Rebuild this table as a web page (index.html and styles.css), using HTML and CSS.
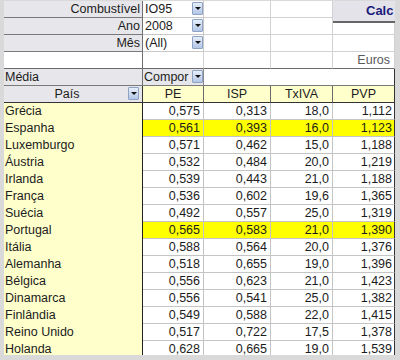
FILE: index.html
```html
<!DOCTYPE html>
<html>
<head>
<meta charset="utf-8">
<link rel="stylesheet" href="styles.css">
</head>
<body>
<div class="frame">
  <div class="sheet">
    <div class="grid">
      <div class="c lab">Combustível</div>
      <div class="c val">IO95<span class="dd"></span></div>
      <div class="c blank"></div>
      <div class="c blank"></div>
      <div class="c blank last"></div>

      <div class="c lab">Ano</div>
      <div class="c val">2008<span class="dd"></span></div>
      <div class="c blank"></div>
      <div class="c blank"></div>
      <div class="c blank last"></div>

      <div class="c lab">Mês</div>
      <div class="c val">(All)<span class="dd"></span></div>
      <div class="c blank"></div>
      <div class="c blank"></div>
      <div class="c blank last"></div>

      <div class="c lab empty"></div>
      <div class="c blank sep"></div>
      <div class="c blank sep"></div>
      <div class="c blank sep"></div>
      <div class="c blank sep last euros">Euros</div>

      <div class="c lab media">Média</div>
      <div class="c compor">Compor<span class="dd"></span></div>
      <div class="c rest"></div>

      <div class="c lab pais">País<span class="dd"></span></div>
      <div class="c hd">PE</div>
      <div class="c hd">ISP</div>
      <div class="c hd">TxIVA</div>
      <div class="c hd last">PVP</div>

      <div class="c ct">Grécia</div><div class="c n">0,575</div><div class="c n">0,313</div><div class="c n">18,0</div><div class="c n last">1,112</div>
      <div class="c ct">Espanha</div><div class="c n hl">0,561</div><div class="c n hl">0,393</div><div class="c n hl">16,0</div><div class="c n hl last">1,123</div>
      <div class="c ct">Luxemburgo</div><div class="c n">0,571</div><div class="c n">0,462</div><div class="c n">15,0</div><div class="c n last">1,188</div>
      <div class="c ct">Áustria</div><div class="c n">0,532</div><div class="c n">0,484</div><div class="c n">20,0</div><div class="c n last">1,219</div>
      <div class="c ct">Irlanda</div><div class="c n">0,539</div><div class="c n">0,443</div><div class="c n">21,0</div><div class="c n last">1,188</div>
      <div class="c ct">França</div><div class="c n">0,536</div><div class="c n">0,602</div><div class="c n">19,6</div><div class="c n last">1,365</div>
      <div class="c ct">Suécia</div><div class="c n">0,492</div><div class="c n">0,557</div><div class="c n">25,0</div><div class="c n last">1,319</div>
      <div class="c ct">Portugal</div><div class="c n hl">0,565</div><div class="c n hl">0,583</div><div class="c n hl">21,0</div><div class="c n hl last">1,390</div>
      <div class="c ct">Itália</div><div class="c n">0,588</div><div class="c n">0,564</div><div class="c n">20,0</div><div class="c n last">1,376</div>
      <div class="c ct">Alemanha</div><div class="c n">0,518</div><div class="c n">0,655</div><div class="c n">19,0</div><div class="c n last">1,396</div>
      <div class="c ct">Bélgica</div><div class="c n">0,556</div><div class="c n">0,623</div><div class="c n">21,0</div><div class="c n last">1,423</div>
      <div class="c ct">Dinamarca</div><div class="c n">0,556</div><div class="c n">0,541</div><div class="c n">25,0</div><div class="c n last">1,382</div>
      <div class="c ct">Finlândia</div><div class="c n">0,549</div><div class="c n">0,588</div><div class="c n">22,0</div><div class="c n last">1,415</div>
      <div class="c ct">Reino Unido</div><div class="c n">0,517</div><div class="c n">0,722</div><div class="c n">17,5</div><div class="c n last">1,378</div>
      <div class="c ct">Holanda</div><div class="c n">0,628</div><div class="c n">0,665</div><div class="c n">19,0</div><div class="c n last">1,539</div>
    </div>
    <div class="calc">Calc</div>
  </div>
</div>
</body>
</html>
```
FILE: styles.css
```css
html, body {
  margin: 0;
  padding: 0;
  background: #d6d6d6;
}
.frame {
  width: 400px;
  height: 360px;
  box-sizing: border-box;
  padding: 1px 5px 5px 4px;
  background: #d9d9d9;
}
.sheet {
  position: relative;
  width: 391px;
  height: 354px;
  overflow: hidden;
  background: #ffffff;
  font-family: "Liberation Sans", Arial, sans-serif;
  font-size: 12.5px;
  color: #1c1c1c;
}
.grid {
  display: grid;
  grid-template-columns: 139px 61px 67px 62px 62px;
  grid-auto-rows: 17px;
}
.c {
  box-sizing: border-box;
  line-height: 16px;
  white-space: nowrap;
  overflow: hidden;
  border-right: 1px solid #d2d2d2;
  border-bottom: 1px solid #d2d2d2;
  position: relative;
}
.lab {
  background: #e7e7eb;
  text-align: right;
  padding-right: 2px;
  border-right: 1px solid #6f6f6f;
  border-bottom: 1px solid #7a7a7a;
}
.lab.empty {
  background: #ffffff;
}
.val {
  padding-left: 2px;
  border-right: 1px solid #c8c8c8;
  border-bottom: 1px solid #c8c8c8;
}
.sep {
  border-bottom: 1px solid #6a6a6a;
}
.lab.empty {
  border-bottom: 1px solid #6a6a6a;
}
.euros {
  text-align: right;
  padding-right: 4px;
  color: #5a5a5a;
}
.media {
  text-align: left;
  padding-left: 1px;
}
.compor {
  background: #e7e7eb;
  padding-left: 1px;
  border-right: 1px solid #8a8a8a;
  border-bottom: 1px solid #7a7a7a;
}
.rest {
  grid-column: span 3;
  border-right: 1px solid #333;
  border-bottom: 1px solid #7a7a7a;
}
.pais {
  text-align: center;
  padding-right: 12px;
  border-bottom: 1px solid #333;
  border-right: 1px solid #333;
}
.pais .dd {
  right: 3px;
}
.hd {
  background: #ffffcc;
  text-align: center;
  border-right: 1px solid #6a6a6a;
  border-bottom: 1px solid #333;
}
.last {
  border-right: 1px solid #333;
}
.blank.last {
  border-right: 1px solid #d2d2d2;
}
.ct {
  background: #ffffcc;
  padding-left: 1px;
  border-bottom: none;
  border-right: 1px solid #222;
}
.n {
  text-align: right;
  padding-right: 3px;
  border-right: 1px solid #c4c4c4;
  border-bottom: 1px solid #c4c4c4;
}
.n.last {
  border-right: 1px solid #333;
  padding-right: 2px;
}
.hl {
  background: #ffff00;
}
.dd {
  position: absolute;
  right: 0px;
  top: 1px;
  width: 11px;
  height: 13px;
  box-sizing: border-box;
  border: 1px solid #8ea3c4;
  border-radius: 1px;
  background: linear-gradient(#e6eefb, #b3c6e6);
}
.dd::after {
  content: "";
  position: absolute;
  left: 2px;
  top: 4px;
  border-left: 3px solid transparent;
  border-right: 3px solid transparent;
  border-top: 3px solid #111;
}
.calc {
  position: absolute;
  left: 329px;
  top: -1px;
  width: 62px;
  height: 23px;
  box-sizing: border-box;
  background: #e3e3e9;
  border-bottom: 2px solid #666;
  padding-left: 33px;
  font-weight: bold;
  font-size: 13px;
  line-height: 22px;
  color: #1b1b7a;
  white-space: nowrap;
  overflow: hidden;
}
```
